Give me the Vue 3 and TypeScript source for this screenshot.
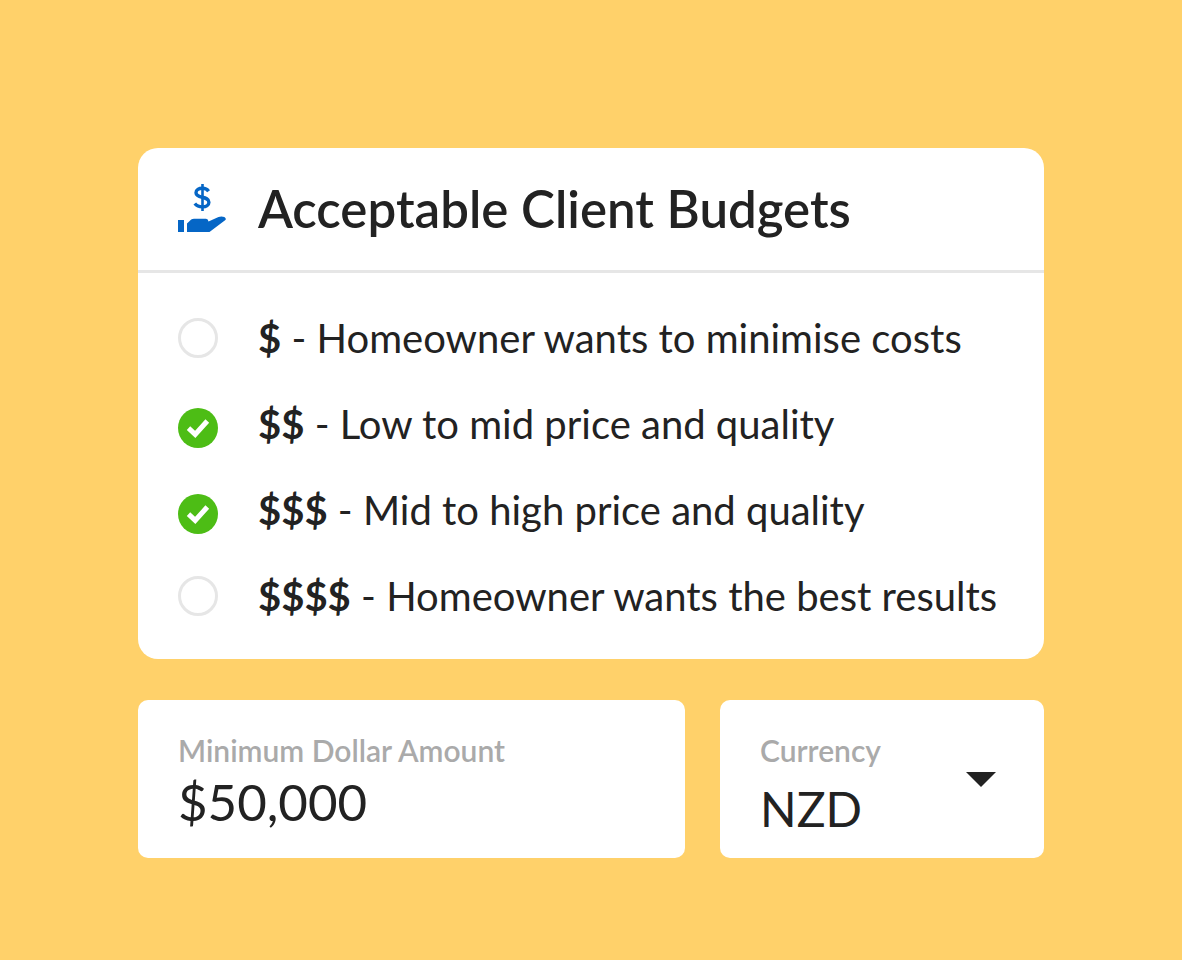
<script setup lang="ts">
import { ref } from 'vue'

interface Budget {
  id: string
  tier: string
  description: string
  accepted: boolean
}

const budgets = ref<Budget[]>([
  { id: 'tier-1', tier: '$', description: 'Homeowner wants to minimise costs', accepted: false },
  { id: 'tier-2', tier: '$$', description: 'Low to mid price and quality', accepted: true },
  { id: 'tier-3', tier: '$$$', description: 'Mid to high price and quality', accepted: true },
  { id: 'tier-4', tier: '$$$$', description: 'Homeowner wants the best results', accepted: false },
])

const amount = ref('$50,000')
const currency = ref('NZD')
</script>

<template>
  <main class="page">
    <section class="card" aria-labelledby="budgets-title">
      <header class="card-header">
        <svg class="hand-icon" viewBox="0 0 48 48" aria-hidden="true">
          <path
            d="M30.600 7.200C29.200 5.200 27.100 4.300 24.500 4.300C20.800 4.300 18 6 18 8.700C18 14.900 30.900 11.600 30.900 18.200C30.900 21.200 28.200 22.900 24.500 22.900C21 22.900 18.400 21.600 16.800 19.500"
            fill="none"
            stroke="#0566c6"
            stroke-width="3.400"
          />
          <path d="M24.500 0V27" fill="none" stroke="#0566c6" stroke-width="2.600" />
          <path d="M0 36h6v12H0z" fill="#0566c6" />
          <path
            d="M9 48V39.500L13.200 35.600Q14.300 34.700 16 34.700H28Q30.200 34.700 30.500 37.400L40.500 33Q43.500 31.800 46.300 33Q48.600 34.500 47.400 36.100L31.500 48Z"
            fill="#0566c6"
          />
        </svg>
        <h1 id="budgets-title" class="title">Acceptable Client Budgets</h1>
      </header>
      <div class="options">
        <label v-for="budget in budgets" :key="budget.id" class="option" :for="budget.id">
          <span class="mark" :class="{ accepted: budget.accepted }">
            <input :id="budget.id" v-model="budget.accepted" class="tick" type="checkbox" />
            <svg v-if="budget.accepted" class="check" viewBox="0 0 40 40" aria-hidden="true">
              <path d="M10.500 20.200L17.200 26.400L29.300 13" fill="none" stroke="#fff" stroke-width="5" />
            </svg>
          </span>
          <span class="text"><b class="tier">{{ budget.tier }}</b> - {{ budget.description }}</span>
        </label>
      </div>
    </section>

    <div class="fields">
      <div class="field">
        <label class="field-label" for="amount">Minimum Dollar Amount</label>
        <input id="amount" v-model="amount" class="value amount" type="text" />
      </div>
      <div class="field">
        <label class="field-label" for="currency">Currency</label>
        <select id="currency" v-model="currency" class="value currency">
          <option>NZD</option>
          <option>AUD</option>
          <option>USD</option>
        </select>
        <svg class="caret" viewBox="0 0 30 15" aria-hidden="true">
          <path d="M0 0H30L15 15Z" fill="#222" />
        </svg>
      </div>
    </div>
  </main>
</template>

<style>
body {
  margin: 0;
  background: #ffd16a;
}
</style>

<style scoped>
.page {
  box-sizing: border-box;
  padding: 148px 138px 102px;
  color: #222;
  font-family: Lato, "Open Sans", sans-serif;
}

.card {
  background: #fff;
  border-radius: 20px;
}

.card-header {
  display: flex;
  align-items: flex-start;
  gap: 32px;
  padding: 36px 40px;
  border-bottom: 3px solid #e6e6e6;
}

.hand-icon {
  width: 48px;
  height: 48px;
  flex: none;
}

.title {
  margin: 0;
  font-size: 51px;
  line-height: 50px;
  font-weight: 600;
  white-space: nowrap;
}

.options {
  padding: 22px 40px 20px;
}

.option {
  display: flex;
  align-items: center;
  gap: 40px;
  height: 86px;
}

.mark {
  display: grid;
  flex: none;
}

.mark.accepted {
  padding-top: 8px;
}

.tick {
  grid-area: 1 / 1;
  appearance: none;
  box-sizing: border-box;
  width: 40px;
  height: 40px;
  margin: 0;
  border: 3px solid #e6e6e6;
  border-radius: 50%;
}

.tick:checked {
  border: 0;
  background: #4dbd15;
}

.check {
  grid-area: 1 / 1;
  width: 40px;
  height: 40px;
  pointer-events: none;
}

.text {
  font-size: 40px;
  line-height: 48px;
  white-space: nowrap;
}

.tier {
  font-weight: 700;
}

.fields {
  display: grid;
  grid-template-columns: minmax(0, 547fr) minmax(0, 324fr);
  gap: 35px;
  margin-top: 41px;
}

.field {
  position: relative;
  padding: 32px 40px 20px;
  background: #fff;
  border-radius: 10px;
}

.field-label {
  display: block;
  color: #aaa;
  font-size: 30px;
  line-height: 36px;
  font-weight: 600;
}

.value {
  display: block;
  appearance: none;
  width: 100%;
  height: 58px;
  margin: 0;
  padding: 0;
  border: 0;
  background: none;
  color: inherit;
  font-family: inherit;
  font-size: 48px;
  line-height: 58px;
}

.amount {
  margin-top: 5px;
  font-size: 51px;
}

.currency {
  margin-top: 12px;
}

.caret {
  position: absolute;
  top: 72px;
  right: 48px;
  width: 30px;
  height: 15px;
  pointer-events: none;
}
</style>
